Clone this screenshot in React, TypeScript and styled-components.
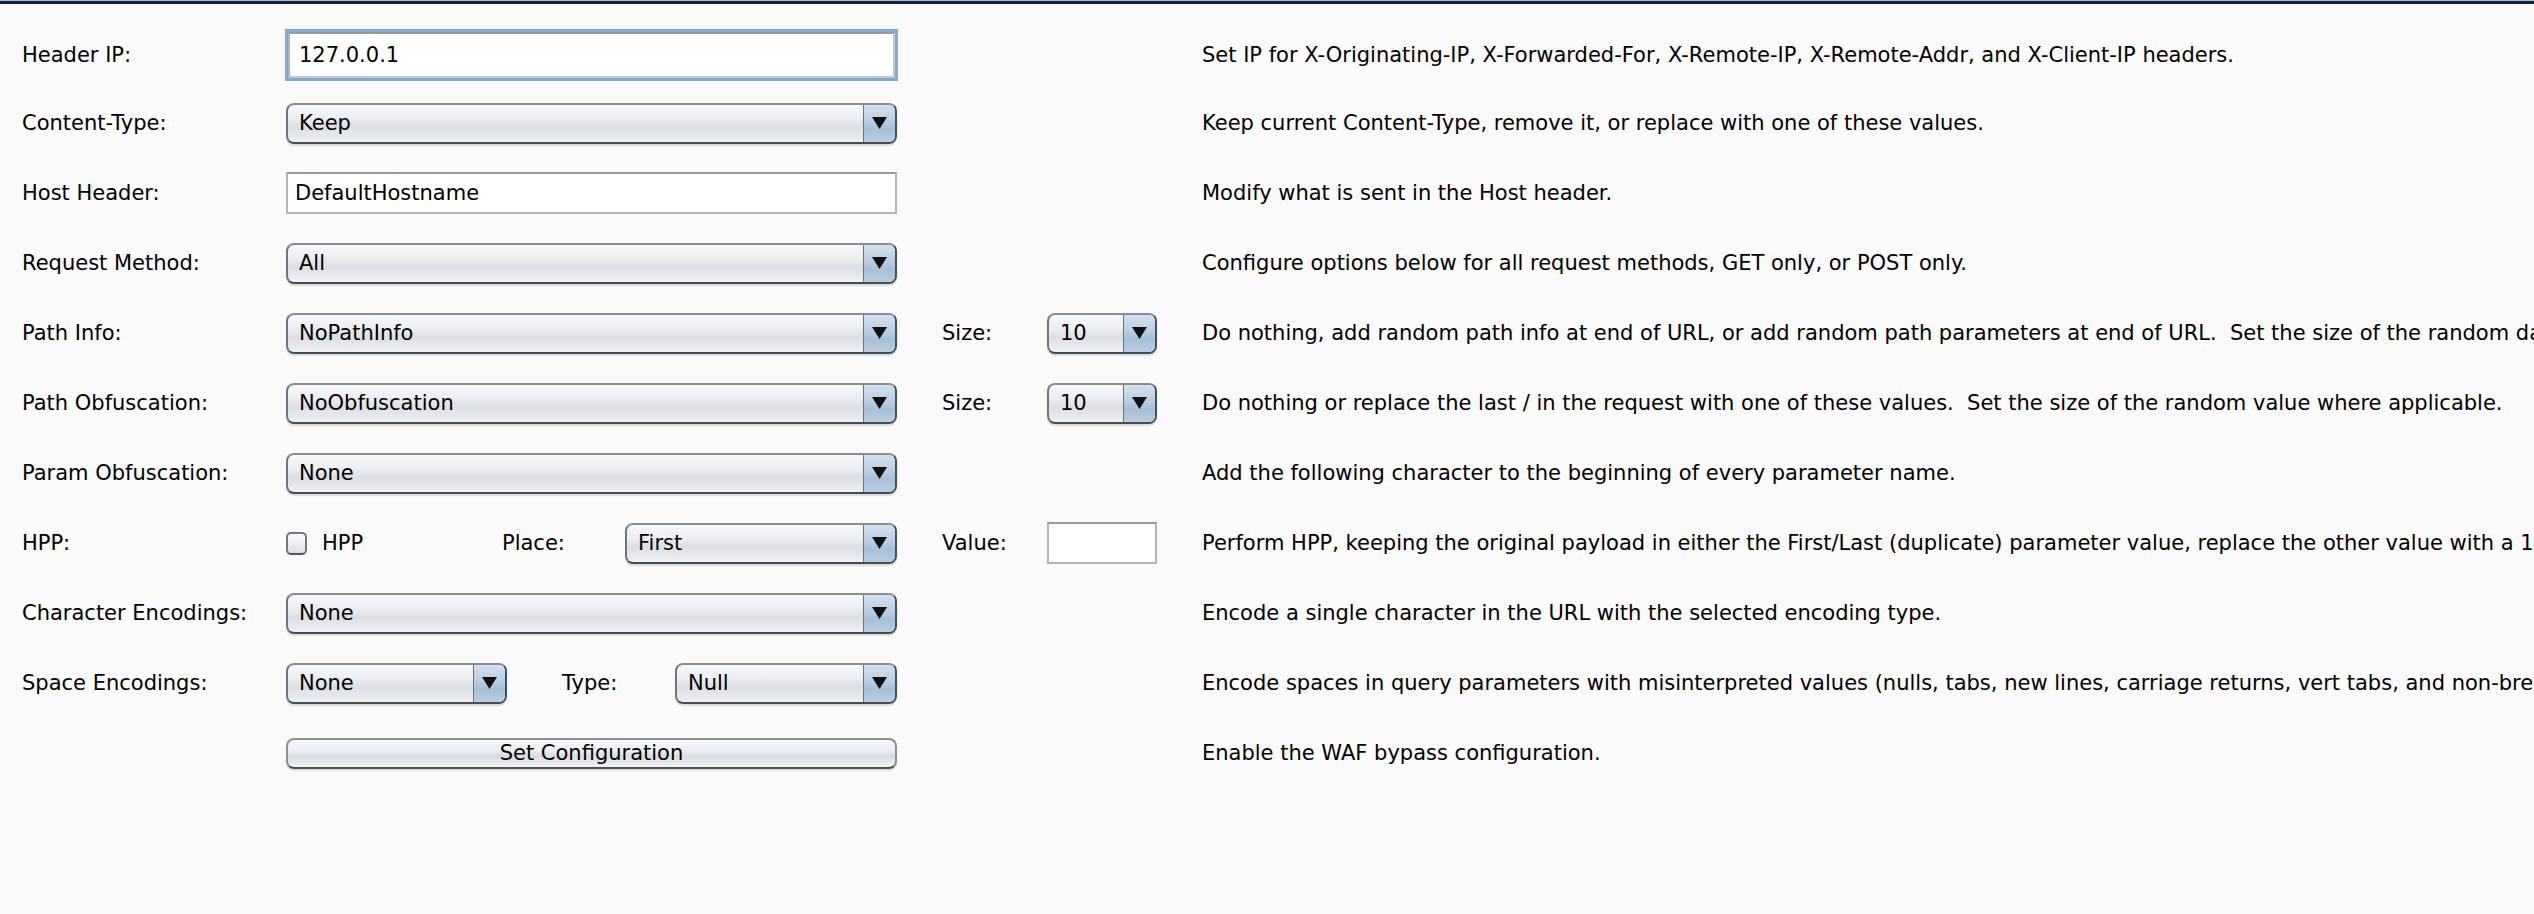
import styled, { createGlobalStyle } from 'styled-components';

const GlobalStyle = createGlobalStyle`
  html, body {
    margin: 0;
    padding: 0;
    background: #fafafa;
    overflow: hidden;
  }
  body {
    font-family: "DejaVu Sans", "Noto Sans", sans-serif;
    color: #000;
  }
`;

// one row of the bypass config form
interface RowDef {
  label: string;
  control: React.ReactNode;
  extraLabel?: string;
  extra?: React.ReactNode;
  desc: string;
}

const Arrow = () => (
  <svg width="15" height="12" viewBox="0 0 15 12">
    <polygon points="0,0 15,0 7.5,12" fill="#111" />
  </svg>
);

const Combo = ({ value, width }: { value: string; width?: number }) => (
  <ComboBox $width={width}>
    <ComboValue>{value}</ComboValue>
    <ComboArrow>
      <Arrow />
    </ComboArrow>
  </ComboBox>
);

export default function App() {
  const rows: RowDef[] = [
    {
      label: 'Header IP:',
      control: <TextField $focused defaultValue="127.0.0.1" />,
      desc: 'Set IP for X-Originating-IP, X-Forwarded-For, X-Remote-IP, X-Remote-Addr, and X-Client-IP headers.',
    },
    {
      label: 'Content-Type:',
      control: <Combo value="Keep" />,
      desc: 'Keep current Content-Type, remove it, or replace with one of these values.',
    },
    {
      label: 'Host Header:',
      control: <TextField defaultValue="DefaultHostname" />,
      desc: 'Modify what is sent in the Host header.',
    },
    {
      label: 'Request Method:',
      control: <Combo value="All" />,
      desc: 'Configure options below for all request methods, GET only, or POST only.',
    },
    {
      label: 'Path Info:',
      control: <Combo value="NoPathInfo" />,
      extraLabel: 'Size:',
      extra: <Combo value="10" />,
      desc: 'Do nothing, add random path info at end of URL, or add random path parameters at end of URL.\u00a0 Set the size of the random data where applicable.',
    },
    {
      label: 'Path Obfuscation:',
      control: <Combo value="NoObfuscation" />,
      extraLabel: 'Size:',
      extra: <Combo value="10" />,
      desc: 'Do nothing or replace the last / in the request with one of these values.\u00a0 Set the size of the random value where applicable.',
    },
    {
      label: 'Param Obfuscation:',
      control: <Combo value="None" />,
      desc: 'Add the following character to the beginning of every parameter name.',
    },
    {
      label: 'HPP:',
      control: (
        <Inline>
          <CheckCell>
            <CheckBox />
            <span>HPP</span>
          </CheckCell>
          <InlineLabel $width={123}>Place:</InlineLabel>
          <Combo value="First" />
        </Inline>
      ),
      extraLabel: 'Value:',
      extra: <TextField />,
      desc: 'Perform HPP, keeping the original payload in either the First/Last (duplicate) parameter value, replace the other value with a 1 character random value.',
    },
    {
      label: 'Character Encodings:',
      control: <Combo value="None" />,
      desc: 'Encode a single character in the URL with the selected encoding type.',
    },
    {
      label: 'Space Encodings:',
      control: (
        <Inline>
          <Combo value="None" width={221} />
          <InlineLabel $width={168} $indent={55}>Type:</InlineLabel>
          <Combo value="Null" />
        </Inline>
      ),
      desc: 'Encode spaces in query parameters with misinterpreted values (nulls, tabs, new lines, carriage returns, vert tabs, and non-breaking spaces).',
    },
    {
      label: '',
      control: <PushButton>Set Configuration</PushButton>,
      desc: 'Enable the WAF bypass configuration.',
    },
  ];

  return (
    <>
      <GlobalStyle />
      <Window>
        <TopRule />
        <Form>
          {rows.map((r, i) => (
            <Row key={i}>
              <FieldLabel>{r.label}</FieldLabel>
              <Cell>{r.control}</Cell>
              <FieldLabel>{r.extraLabel}</FieldLabel>
              <Cell>{r.extra}</Cell>
              <Description>{r.desc}</Description>
            </Row>
          ))}
        </Form>
      </Window>
    </>
  );
}

const Window = styled.div`
  min-height: 914px;
  background: #fafafa;
`;

const TopRule = styled.div`
  height: 3px;
  background: #15223b;
  border-top: 1px solid #a9bdd6;
`;

const Form = styled.div`
  display: flex;
  flex-direction: column;
  gap: 28px;
  padding: 28px 0 0 22px;
`;

const Row = styled.div`
  display: grid;
  grid-template-columns: 219px 611px 60px 110px minmax(0, 1fr);
  column-gap: 45px;
  align-items: center;
  height: 42px;
  font-size: 21px;
`;

const FieldLabel = styled.div`
  white-space: nowrap;
`;

const Cell = styled.div`
  display: flex;
  align-items: center;
  min-width: 0;
`;

const Description = styled.div`
  white-space: nowrap;
`;

const Inline = styled.div`
  display: flex;
  align-items: center;
  width: 100%;
`;

const InlineLabel = styled.span<{ $width: number; $indent?: number }>`
  flex: none;
  box-sizing: border-box;
  width: ${p => p.$width}px;
  padding-left: ${p => p.$indent ?? 0}px;
  white-space: nowrap;
`;

const CheckCell = styled.label`
  flex: none;
  width: 216px;
  display: flex;
  align-items: center;
  gap: 15px;
`;

const CheckBox = styled.span`
  box-sizing: border-box;
  width: 21px;
  height: 23px;
  border-radius: 5px;
  border: 2px solid #74787d;
  border-bottom-color: #55595e;
  background: linear-gradient(#fdfdfe, #e9ebee 60%, #dcdfe4);
`;

const ComboBox = styled.div<{ $width?: number }>`
  box-sizing: border-box;
  display: flex;
  align-items: stretch;
  height: 41px;
  flex: ${p => (p.$width ? 'none' : '1')};
  width: ${p => (p.$width ? `${p.$width}px` : '100%')};
  border: 2px solid #8a8e93;
  border-bottom-color: #464c53;
  border-left-color: #71767c;
  border-right-color: #3d5064;
  border-radius: 8px;
  overflow: hidden;
  background: linear-gradient(#f7f8fa, #eceef1 35%, #dcdee3 60%, #eef0f3);
  box-shadow: 0 2px 1px rgba(0, 0, 0, 0.12);
`;

const ComboValue = styled.div`
  flex: 1;
  display: flex;
  align-items: center;
  padding-left: 11px;
  white-space: nowrap;
`;

const ComboArrow = styled.div`
  flex: none;
  width: 31px;
  display: flex;
  align-items: center;
  justify-content: center;
  border-left: 1px solid #5d7590;
  background: linear-gradient(#d3e0ec, #bcd0e2 40%, #a7c0d6 65%, #b9cde0);
`;

const TextField = styled.input<{ $focused?: boolean }>`
  box-sizing: border-box;
  width: 100%;
  height: ${p => (p.$focused ? 46 : 42)}px;
  margin: ${p => (p.$focused ? '0 -2px' : '0')};
  padding: 0 0 0 ${p => (p.$focused ? 9 : 7)}px;
  font: inherit;
  color: #000;
  background: #fff;
  border: 2px solid #b4b4b4;
  border-top-color: #9a9a9a;
  outline: none;
  box-shadow: ${p => (p.$focused ? '0 0 0 3px #7fabdb' : 'none')};
  ${p => (p.$focused ? 'border-color: #9a9a9a #c8c8c8 #c8c8c8 #b4b4b4; width: calc(100% - 2px); margin: 0 2px;' : '')}
`;

const PushButton = styled.button`
  box-sizing: border-box;
  width: 100%;
  height: 31px;
  padding: 0;
  font: inherit;
  color: #000;
  border: 2px solid #8c9095;
  border-bottom-color: #4c5158;
  border-radius: 8px;
  background: linear-gradient(#f6f7f9, #eceef1 40%, #d8dbe0 60%, #f0f2f5);
  box-shadow: 0 2px 1px rgba(0, 0, 0, 0.12);
`;
